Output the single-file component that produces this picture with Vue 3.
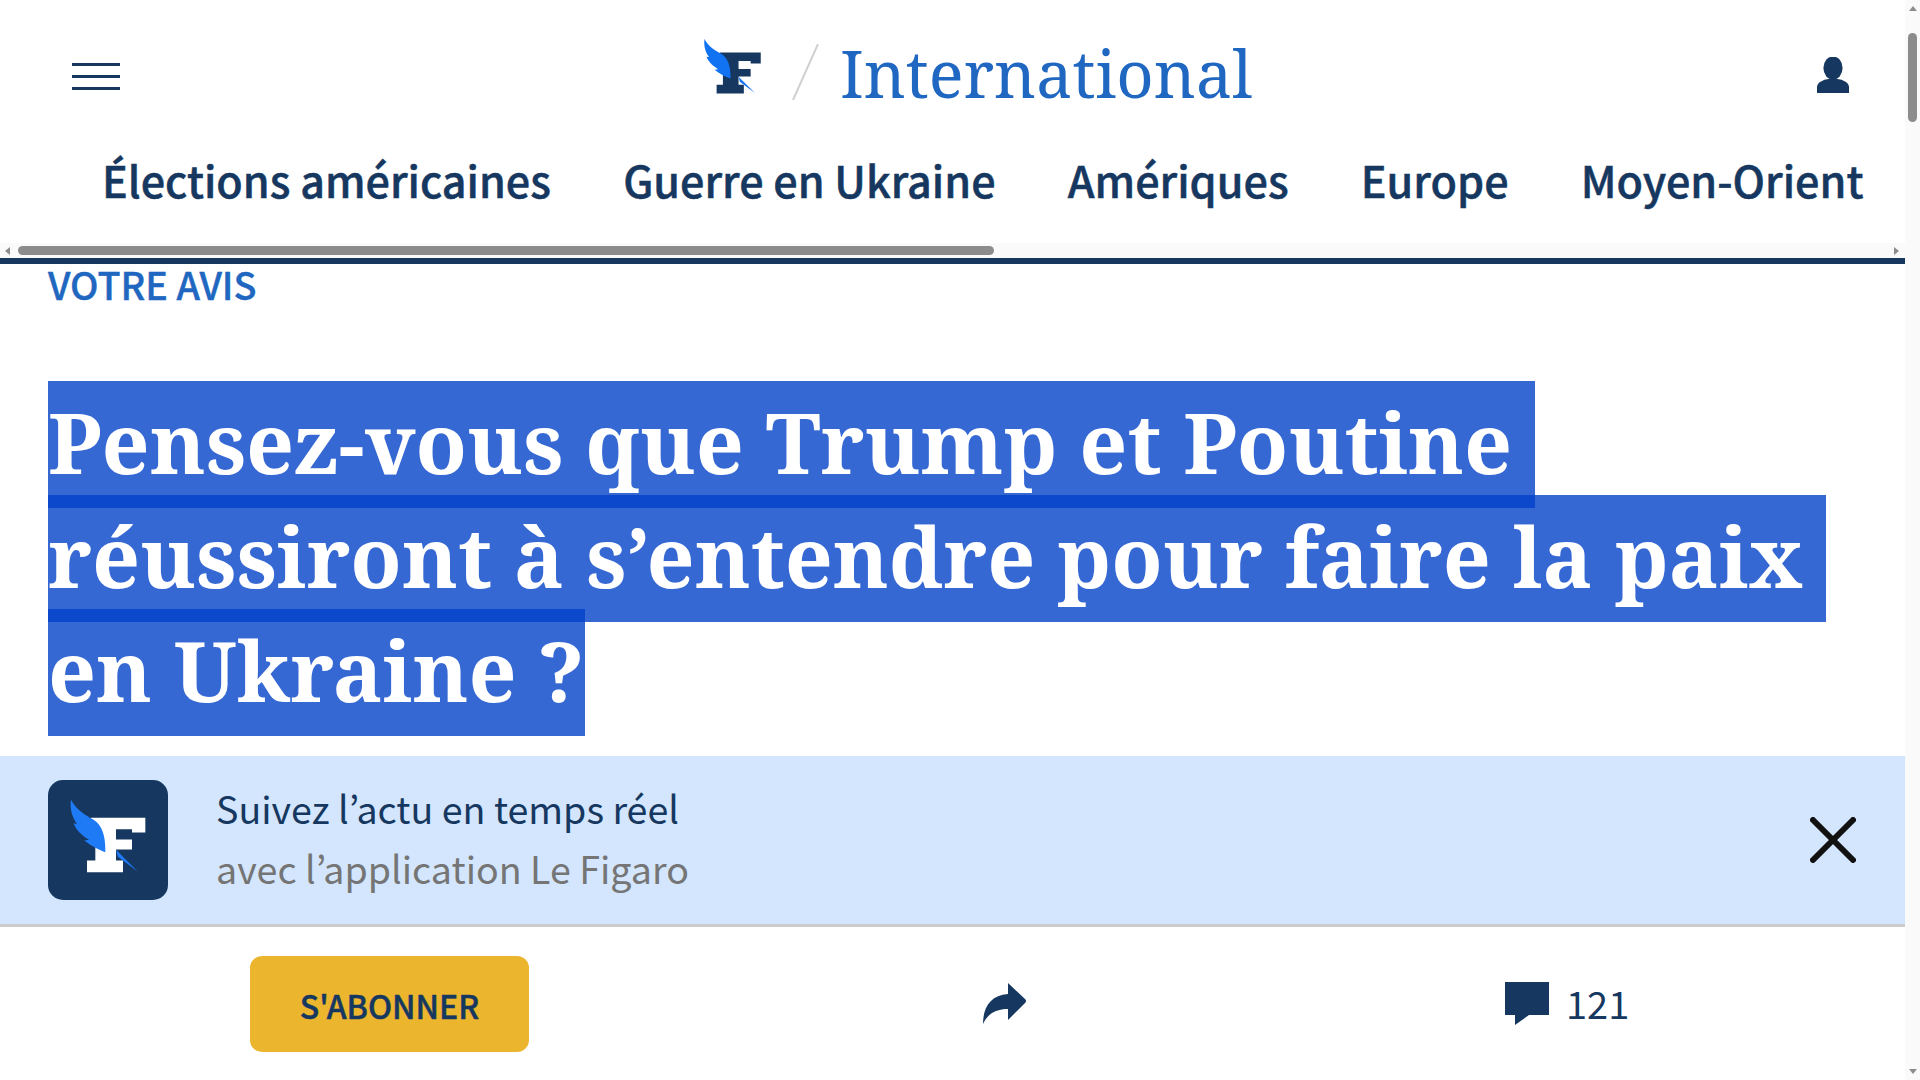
<script setup>
const navItems = ['Élections américaines', 'Guerre en Ukraine', 'Amériques', 'Europe', 'Moyen-Orient'];
const titleLines = ['Pensez-vous que Trump et Poutine', 'réussiront à s’entendre pour faire la paix', 'en Ukraine ?'];
</script>

<template>
  <div class="page">
    <div class="main">
      <header class="top">
        <div class="burger"><span></span><span></span><span></span></div>
        <svg class="logo" viewBox="120 85 226 221">
          <path fill="#163860" d="M182 142H345V186H305V176H257V207H305V237H257V270H278V305H170V270H195V175H182Z" />
          <path fill="#1273f2" d="M122 88C135 115 165 135 190 148C215 165 226 195 225 245C205 238 180 225 162 210L176 208C155 195 138 180 130 159L140 160C125 140 118 115 122 88Z" />
          <path fill="#1273f2" d="M257 238L322 303L262 258Z" />
        </svg>
        <svg class="slash" viewBox="0 0 27 56"><path d="M26 0L1 56" stroke="#d0d0d0" stroke-width="2" /></svg>
        <div class="section-name">International</div>
        <svg class="user" viewBox="0 0 32 36">
          <ellipse cx="16" cy="11" rx="9.6" ry="11.5" fill="#163860" />
          <path fill="#163860" d="M0 36V30C0 25 8 21.500 16 21.500S32 25 32 30V36Z" />
        </svg>
      </header>

      <nav class="nav">
        <a v-for="item in navItems" :key="item">{{ item }}</a>
      </nav>

      <div class="hscroll">
        <i class="arrow-left"></i>
        <div class="hthumb"></div>
        <i class="arrow-right"></i>
      </div>

      <div class="article">
        <div class="kicker">VOTRE AVIS</div>
        <h1 class="title">
          <span v-for="line in titleLines" :key="line">{{ line }}</span>
        </h1>
      </div>

      <div class="banner">
        <div class="app-icon">
          <svg viewBox="110 80 240 230">
            <path fill="#fff" d="M182 142H345V186H305V176H257V207H305V237H257V270H278V305H170V270H195V175H182Z" />
            <path fill="#1f7bf5" d="M122 88C135 115 165 135 190 148C215 165 226 195 225 245C205 238 180 225 162 210L176 208C155 195 138 180 130 159L140 160C125 140 118 115 122 88Z" />
            <path fill="#1f7bf5" d="M257 238L322 303L262 258Z" />
          </svg>
        </div>
        <div class="banner-text">
          <div>Suivez l’actu en temps réel</div>
          <div class="grey">avec l’application Le Figaro</div>
        </div>
        <svg class="close" viewBox="0 0 46 46">
          <path d="M3 3L43 43M43 3L3 43" stroke="#111" stroke-width="6" stroke-linecap="round" />
        </svg>
      </div>

      <div class="actions">
        <button class="subscribe">S'ABONNER</button>
        <svg class="share" viewBox="0 0 43 42">
          <path fill="#163860" d="M25 0L42.500 16.500Q43.500 18 42.500 19.500L25 37V26C14 26 5 30 0 41C0 24 8 12 25 11Z" />
        </svg>
        <div class="comments">
          <svg viewBox="0 0 44 44">
            <path fill="#163860" d="M0 0H44V33H24L10 43V33H0Z" />
          </svg>
          <span>121</span>
        </div>
      </div>
    </div>

    <div class="vscroll">
      <i class="arrow-up"></i>
      <div class="vthumb"></div>
      <i class="arrow-down"></i>
    </div>
  </div>
</template>

<style>
html,
body {
  overflow: hidden;
}
</style>

<style scoped>
.page {
  display: flex;
  height: 1080px;
  overflow: hidden;
  background: #fff;
  font-family: "Noto Sans CJK KR", "Noto Sans", sans-serif;
  color: #163860;
}
.main {
  width: 1905px;
  display: flex;
  flex-direction: column;
}
.top {
  height: 135px;
  display: flex;
  align-items: flex-start;
  padding-left: 72px;
  box-sizing: border-box;
}
.burger {
  width: 48px;
  margin-top: 63px;
  display: flex;
  flex-direction: column;
  gap: 9px;
}
.burger span {
  height: 3px;
  background: #163860;
}
.logo {
  width: 57px;
  height: 56px;
  margin: 38px 0 0 584px;
}
.slash {
  width: 27px;
  height: 56px;
  margin: 44px 0 0 31px;
}
.section-name {
  margin: 28px 0 0 21px;
  font-family: "Noto Serif", "Liberation Serif", serif;
  font-size: 65px;
  line-height: 90px;
  color: #1f67c0;
}
.user {
  width: 32px;
  height: 36px;
  margin: 57px 56px 0 auto;
}
.nav {
  height: 108px;
  display: flex;
  gap: 72.200px;
  padding-left: 102px;
  box-sizing: border-box;
  font-size: 43.100px;
  font-weight: 500;
  line-height: 88px;
  white-space: nowrap;
  -webkit-text-stroke: 0.5px #163860;
}
.hscroll {
  height: 15px;
  background: #fafafa;
  display: flex;
  align-items: center;
  padding: 0 6px 0 5px;
  flex: none;
}
.hthumb {
  width: 976px;
  height: 9px;
  margin-left: 8px;
  border-radius: 5px;
  background: #8c8c8c;
}
.arrow-left {
  border: 4px solid transparent;
  border-left: 0;
  border-right: 5px solid #8c8c8c;
}
.arrow-right {
  margin-left: auto;
  border: 4px solid transparent;
  border-right: 0;
  border-left: 5px solid #8c8c8c;
}
.article {
  height: 498px;
  flex: none;
  border-top: 6px solid #163860;
  box-sizing: border-box;
  padding-left: 48px;
}
.kicker {
  margin-top: -4px;
  font-size: 37.800px;
  font-weight: 500;
  line-height: 48px;
  color: #1f67c0;
  -webkit-text-stroke: 0.4px #1f67c0;
}
.title {
  margin: 73px 0 0 -48px;
  padding-left: 48px;
  font-family: "Noto Serif", "Liberation Serif", serif;
  font-size: 84px;
  font-weight: 700;
  line-height: 121px;
  color: #fff;
}
.title span {
  display: block;
  width: fit-content;
  height: 127px;
  margin-bottom: -13px;
  padding-right: 23px;
  white-space: nowrap;
  background: rgba(0, 63, 200, 0.787);
}
.title span:last-child {
  padding-right: 0;
}
.banner {
  height: 171px;
  flex: none;
  box-sizing: border-box;
  border-bottom: 3px solid #cccccc;
  background: #d3e6fd;
  display: flex;
  align-items: center;
  padding: 0 49px 0 48px;
}
.app-icon {
  width: 120px;
  height: 120px;
  border-radius: 15px;
  background: #163860;
}
.app-icon svg {
  display: block;
  width: 80px;
  height: 77px;
  margin: 17px 0 0 19px;
}
.banner-text {
  margin: 0 0 5px 48px;
  font-size: 37.600px;
  line-height: 60px;
}
.grey {
  color: #757575;
}
.close {
  width: 46px;
  height: 46px;
  margin-left: auto;
}
.actions {
  flex: 1;
  display: flex;
  align-items: center;
  padding: 0 0 0 250px;
}
.subscribe {
  width: 279px;
  height: 96px;
  padding: 2px 0 0;
  border: 0;
  border-radius: 12px;
  background: #ecb52e;
  color: #163860;
  font-family: inherit;
  font-size: 32px;
  font-weight: 500;
  -webkit-text-stroke: 0.5px #163860;
}
.share {
  width: 43px;
  height: 42px;
  margin: 0 0 0 454px;
}
.comments {
  display: flex;
  align-items: center;
  gap: 17px;
  margin: 0 0 0 479px;
  font-size: 38px;
  line-height: 44px;
}
.comments span {
  margin-top: -2px;
}
.comments svg {
  width: 44px;
  height: 44px;
}
.vscroll {
  width: 15px;
  height: 1080px;
  background: #fafafa;
  display: flex;
  flex-direction: column;
  align-items: center;
}
.vthumb {
  width: 9px;
  height: 89px;
  margin-top: 22px;
  border-radius: 5px;
  background: #8c8c8c;
}
.arrow-up {
  margin-top: 6px;
  border: 4px solid transparent;
  border-top: 0;
  border-bottom: 5px solid #8c8c8c;
}
.arrow-down {
  margin-top: auto;
  margin-bottom: 6px;
  border: 4px solid transparent;
  border-bottom: 0;
  border-top: 5px solid #8c8c8c;
}
</style>
